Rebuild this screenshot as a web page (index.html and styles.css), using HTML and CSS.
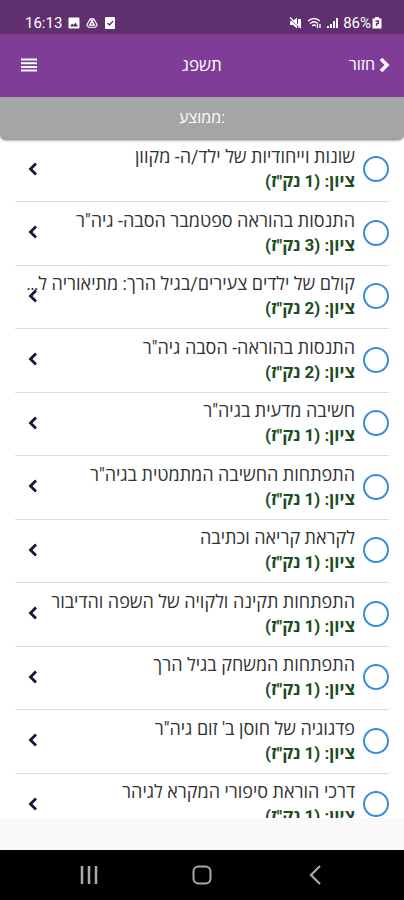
FILE: index.html
```html
<!DOCTYPE html>
<html lang="he" dir="rtl">
<head>
<meta charset="utf-8">
<meta name="viewport" content="width=device-width, initial-scale=1">
<title>תשפג</title>
<link rel="stylesheet" href="styles.css">
</head>
<body>
<div class="status" dir="ltr">
  <div class="status-group">
    <span>16:13</span>
    <svg width="12" height="12" viewBox="0 0 12 12"><path fill="#fff" fill-rule="evenodd" d="M1.500 .5h9a1 1 0 0 1 1 1v9a1 1 0 0 1-1 1h-9a1 1 0 0 1-1-1v-9a1 1 0 0 1 1-1zM2 9.500h8L7.500 5.500 5.500 8 4 6.500z"/></svg>
    <svg width="12" height="12" viewBox="0 0 14 12" fill="none" stroke="#fff" stroke-width="1.300"><path d="M5 1.200h4L13 8l-1.800 3H2.800L1 8z"/><path d="M7 3.500 4 8.500h6zM5 1.200l4.500 7.300M9 1.200 4 8.500"/></svg>
    <svg width="12" height="12" viewBox="0 0 12 12"><rect x="1" width="10" height="12" rx="1" fill="#fff"/><path d="M3.500 6l2 2 3.500-4" fill="none" stroke="#602f70" stroke-width="1.300"/></svg>
  </div>
  <div class="status-group status-end">
    <svg width="13" height="12" viewBox="0 0 13 12"><path d="M1 4h3l4-3.500v11L4 8H1zM9 2h3v9H9z" fill="#fff"/><path d="M0 1l11 10" stroke="#602f70" stroke-width="1"/><path d="M1 .5l11 10.500" stroke="#fff" stroke-width="1.200"/></svg>
    <svg width="15" height="12" viewBox="0 0 15 12" fill="none" stroke="#fff" stroke-width="1.300"><path d="M1 4q6-5 12 0M3 6.500q4-3.500 8 0M5 9q2-2 4 0"/><path d="M10.500 7v4M13 7v4"/></svg>
    <svg width="11" height="12" viewBox="0 0 11 12" fill="#fff"><path d="M0 9h2v2H0zM3 7h2v4H3zM6 4h2v7H6zM9 1h2v10H9z"/></svg>
    <span class="battery">86%</span>
    <svg width="10" height="12" viewBox="0 0 10 12"><path d="M3 0h4v1.500h2.500V11.500h-9v-10H3z" fill="#fff"/><path d="M3.500 4h3v2.500h-2V9" fill="none" stroke="#602f70" stroke-width="1.300"/></svg>
  </div>
</div>
<header class="bar">
  <a class="back" href="#"><svg width="11" height="16" viewBox="0 0 11 16"><path d="M2 2l6 6-6 6" fill="none" stroke="#fff" stroke-width="3.500"/></svg>חזור</a>
  <h1>תשפג</h1>
  <button class="menu" aria-label="תפריט"><svg width="16" height="14" viewBox="0 0 16 14"><path d="M0 1.500h16M0 5.200h16M0 8.900h16M0 12.600h16" stroke="#fff" stroke-width="2"/></svg></button>
</header>
<div class="average" dir="ltr">ממוצע:</div>
<main>
<ul class="courses"></ul>
</main>
<div class="gap"></div>
<nav class="system" dir="ltr">
  <button aria-label="אחרונים"><svg width="20" height="20" viewBox="0 0 20 20"><path d="M3 1v18M10 1v18M17 1v18" stroke="#aaa" stroke-width="2.500"/></svg></button>
  <button aria-label="בית"><svg width="20" height="20" viewBox="0 0 20 20"><rect x="1.500" y="1.500" width="17" height="17" rx="5" fill="none" stroke="#aaa" stroke-width="2"/></svg></button>
  <button aria-label="חזרה"><svg width="20" height="20" viewBox="0 0 20 20"><path d="M15 1L6 10l9 9" fill="none" stroke="#aaa" stroke-width="2.200"/></svg></button>
</nav>
<script src="courses.js"></script>
</body>
</html>
```
FILE: styles.css
```css
* { box-sizing: border-box; }
body {
  margin: 0;
  height: 100vh;
  display: flex;
  flex-direction: column;
  overflow: hidden;
  background: #fff;
  color: #333;
  font: 16px/24px Roboto, "Open Sans", "Noto Sans", sans-serif;
}
button { border: 0; padding: 0; background: none; cursor: pointer; }
svg { display: block; flex: none; }

.status {
  display: flex;
  justify-content: space-between;
  padding: 11px 22px 0 25px;
  height: 34px;
  flex: none;
  background: #602f70;
  color: #fff;
  font-size: 15px;
}
.status-group { display: flex; align-items: center; gap: 6px; height: 24px; }
.status-end { gap: 5px; }
.battery { margin-right: -4px; }

.bar {
  display: grid;
  grid-template-columns: 1fr auto 1fr;
  align-items: center;
  padding: 0 14px 2px;
  height: 63px;
  flex: none;
  background: #803d98;
  color: #fff;
}
.back { display: flex; align-items: center; gap: 4px; color: inherit; text-decoration: none; }
.bar h1 { margin: 0; font-size: 17px; font-weight: 500; }
.menu { justify-self: end; margin-inline-end: 7px; }

.average {
  position: relative;
  z-index: 1;
  flex: none;
  height: 42px;
  line-height: 42px;
  text-align: center;
  background: #a3a6a4;
  color: #fff;
  border-radius: 0 0 6px 6px;
  box-shadow: 0 1px 3px #666;
}

main { flex: 1; min-height: 0; overflow: hidden; }
.courses { list-style: none; margin: 0; padding: 0 15px; font-size: 18px; }
.courses li { position: relative; padding: 6px 0 8px; border-bottom: 1px solid #ddd; }
.courses li:nth-child(even) { padding-top: 7px; }
.courses label { display: flex; align-items: center; gap: 8px; padding-left: 7px; }
.courses input {
  appearance: none;
  flex: none;
  width: 26px;
  height: 26px;
  margin: 0;
  border: 2px solid #3a8be0;
  border-radius: 50%;
}
.text { flex: 1; min-width: 0; }
.name, .grade { display: block; }
.name { overflow: hidden; white-space: nowrap; text-overflow: ellipsis; }
.grade { color: #1b4d22; font-size: 17px; font-weight: 700; }
.open { position: absolute; left: 12px; top: 23px; }

.gap { flex: none; height: 32px; background: #fafafa; }
.system {
  display: grid;
  grid-template-columns: repeat(3, 1fr);
  align-items: center;
  justify-items: center;
  flex: none;
  height: 50px;
  padding: 0 32px;
  background: #000;
}
```
FILE: courses.js
```js
const courses = [
  ["שונות וייחודיות של ילד/ה- מקוון", 1],
  ["התנסות בהוראה ספטמבר הסבה- גיה\"ר", 3],
  ["קולם של ילדים צעירים/בגיל הרך: מתיאוריה למעשה", 2],
  ["התנסות בהוראה- הסבה גיה\"ר", 2],
  ["חשיבה מדעית בגיה\"ר", 1],
  ["התפתחות החשיבה המתמטית בגיה\"ר", 1],
  ["לקראת קריאה וכתיבה", 1],
  ["התפתחות תקינה ולקויה של השפה והדיבור", 1],
  ["התפתחות המשחק בגיל הרך", 1],
  ["פדגוגיה של חוסן ב' זום גיה\"ר", 1],
  ["דרכי הוראת סיפורי המקרא לגיהר", 1]
];
document.querySelector(".courses").innerHTML = courses.map(([name, credits]) => `
  <li>
    <label><input type="checkbox"><span class="text"><span class="name">${name}</span><span class="grade">ציון: (${credits} נק"ז)</span></span></label>
    <button class="open" aria-label="פרטים"><svg width="11" height="14" viewBox="0 0 11 14"><path d="M9 1.500L3.500 7 9 12.500" fill="none" stroke="#14143c" stroke-width="2.800"/></svg></button>
  </li>`).join("");
```
